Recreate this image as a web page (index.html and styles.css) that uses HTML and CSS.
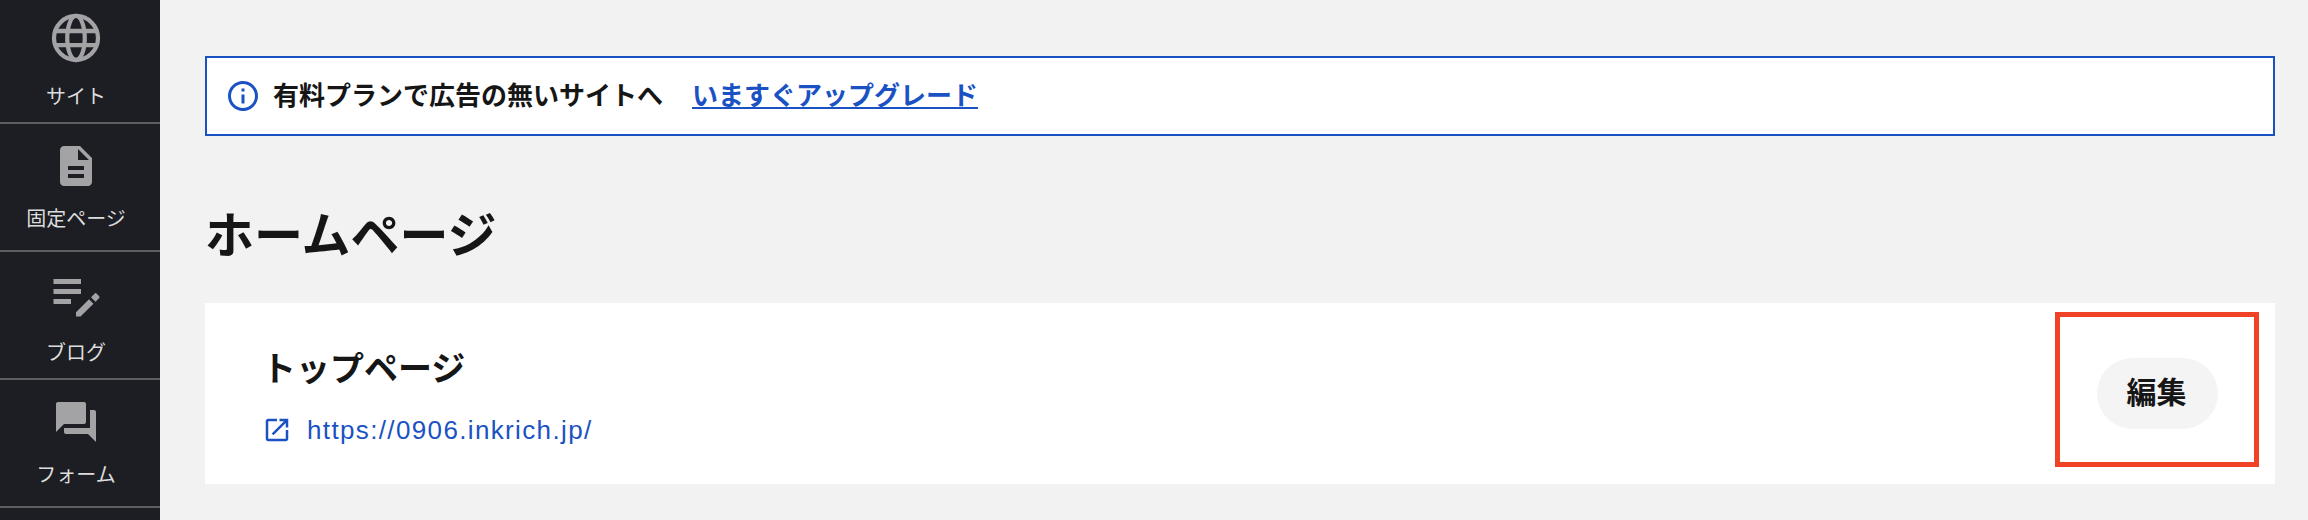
FILE: index.html

```html
<!DOCTYPE html>
<html lang="ja">
<head>
    <meta charset="UTF-8">
    <meta name="viewport" content="width=device-width, initial-scale=1.0">
    <title>ホームページ</title>
    <link rel="stylesheet" href="styles.css">
</head>
<body>

    <div class="layout">
        <!-- Sidebar -->
        <nav class="sidebar">
            <a class="nav-item" href="#">
                <svg class="nav-icon-lg" viewBox="0 0 24 24" fill="none" stroke="#a3a3a5" stroke-width="1.7">
                    <circle cx="12" cy="12" r="8.8"/>
                    <ellipse cx="12" cy="12" rx="3.5" ry="8.8"/>
                    <path d="M3.6 9.2h16.8M3.6 14.8h16.8"/>
                </svg>
                <span class="nav-label">サイト</span>
            </a>
            <a class="nav-item" href="#">
                <svg class="nav-icon" viewBox="0 0 24 24" fill="#a3a3a5">
                    <path d="M14 2H6c-1.1 0-1.99.9-1.99 2L4 20c0 1.1.89 2 1.99 2H18c1.1 0 2-.9 2-2V8l-6-6zm2 16H8v-2h8v2zm0-4H8v-2h8v2zm-3-5V3.5L18.5 9H13z"/>
                </svg>
                <span class="nav-label">固定ページ</span>
            </a>
            <a class="nav-item" href="#">
                <svg class="nav-icon-lg" viewBox="0 0 24 24" fill="#a3a3a5">
                    <path d="M3 6h11v2H3zM3 10h11v2H3zM3 14h7v2H3zM12 19.3l5.2-5.2 1.8 1.8-5.2 5.1H12zM18 13.3l1.4-1.4a.6.6 0 0 1 .9 0l.9.9a.6.6 0 0 1 0 .9l-1.4 1.4z"/>
                </svg>
                <span class="nav-label">ブログ</span>
            </a>
            <a class="nav-item" href="#">
                <svg class="nav-icon" viewBox="0 0 24 24" fill="#a3a3a5">
                    <path d="M21 6h-2v9H6v2c0 .55.45 1 1 1h11l4 4V7c0-.55-.45-1-1-1zm-4 6V3c0-.55-.45-1-1-1H3c-.55 0-1 .45-1 1v14l4-4h10c.55 0 1-.45 1-1z"/>
                </svg>
                <span class="nav-label">フォーム</span>
            </a>
        </nav>

        <main class="main">
            <!-- Upgrade notice -->
            <div class="notice">
                <svg class="notice-icon" viewBox="0 0 24 24" fill="#1a52c4">
                    <path d="M11 7h2v2h-2zm0 4h2v6h-2zm1-9C6.48 2 2 6.48 2 12s4.48 10 10 10 10-4.48 10-10S17.52 2 12 2zm0 18c-4.41 0-8-3.59-8-8s3.59-8 8-8 8 3.59 8 8-3.59 8-8 8z"/>
                </svg>
                <span class="notice-text">有料プランで広告の無いサイトへ</span>
                <a class="notice-link" href="#">いますぐアップグレード</a>
            </div>

            <h1 class="page-title">ホームページ</h1>

            <div class="page-card">
                <div class="page-info">
                    <p class="page-name">トップページ</p>
                    <a class="page-url" href="#">
                        <svg class="url-icon" viewBox="0 0 24 24" fill="#1a52c4">
                            <path d="M19 19H5V5h7V3H5c-1.11 0-2 .9-2 2v14c0 1.1.89 2 2 2h14c1.1 0 2-.9 2-2v-7h-2v7zM14 3v2h3.59l-9.83 9.83 1.41 1.41L19 6.41V10h2V3h-7z"/>
                        </svg>
                        https://0906.inkrich.jp/
                    </a>
                </div>
                <button type="button" class="edit-btn">編集</button>
                <!-- Red annotation round the button -->
                <div class="highlight"></div>
            </div>
        </main>
    </div>

</body>
</html>
```

FILE: styles.css

```css
body {
    font-family: "Liberation Sans", "Noto Sans CJK JP", sans-serif;
    margin: 0;
    padding: 0;
    background-color: #f2f2f2;
    color: #161616;
    overflow: hidden;
}

.layout {
    display: flex;
    height: 520px;
}

.sidebar {
    width: 160px;
    flex-shrink: 0;
    margin-top: -4px;
    height: 524px;
    background-color: #1c1e23;
}

.nav-item {
    display: flex;
    flex-direction: column;
    align-items: center;
    justify-content: center;
    box-sizing: border-box;
    height: 128px;
    padding: 1px 8px 0 0;
    border-bottom: 2px solid #5c5d60;
    color: #dcdcdc;
    text-decoration: none;
}

.nav-icon {
    width: 48px;
    height: 48px;
    margin-bottom: 15px;
}

.nav-icon-lg {
    width: 60px;
    height: 60px;
    margin-bottom: 15px;
}

.nav-label {
    font-size: 20px;
    line-height: 28px;
}

.main {
    flex: 1;
    padding: 56px 33px 0 45px;
}

.notice {
    display: flex;
    align-items: center;
    box-sizing: border-box;
    height: 80px;
    padding-left: 18px;
    background-color: #fff;
    border: 2px solid #1a52c4;
    font-size: 26px;
    font-weight: 700;
}

.notice-icon {
    width: 36px;
    height: 36px;
    margin-right: 12px;
}

.notice-text {
    margin-right: 29px;
    padding-bottom: 5px;
}

.notice-link {
    padding-bottom: 5px;
    color: #1a52c4;
}

.page-title {
    font-size: 49px;
    font-weight: 700;
    line-height: 70px;
    margin: 65px 0 32px;
}

.page-card {
    position: relative;
    display: flex;
    justify-content: space-between;
    align-items: center;
    box-sizing: border-box;
    height: 181px;
    padding: 0 57px;
    background-color: #fff;
}

.page-info {
    padding-top: 12px;
}

.page-name {
    font-size: 34px;
    font-weight: 700;
    line-height: 40px;
    margin: 0 0 21px;
}

.page-url {
    display: flex;
    align-items: center;
    font-size: 26px;
    line-height: 40px;
    letter-spacing: 1.36px;
    color: #1a52c4;
    text-decoration: none;
}

.url-icon {
    width: 30px;
    height: 30px;
    margin-right: 15px;
}

.edit-btn {
    width: 121px;
    height: 71px;
    padding: 0 2px 7px 0;
    border: none;
    border-radius: 36px;
    background-color: #f4f4f4;
    color: #161616;
    font-family: inherit;
    font-size: 30px;
    font-weight: 700;
}

.highlight {
    position: absolute;
    top: 9px;
    right: 16px;
    box-sizing: border-box;
    width: 204px;
    height: 155px;
    border: 5px solid #f04326;
}
```
